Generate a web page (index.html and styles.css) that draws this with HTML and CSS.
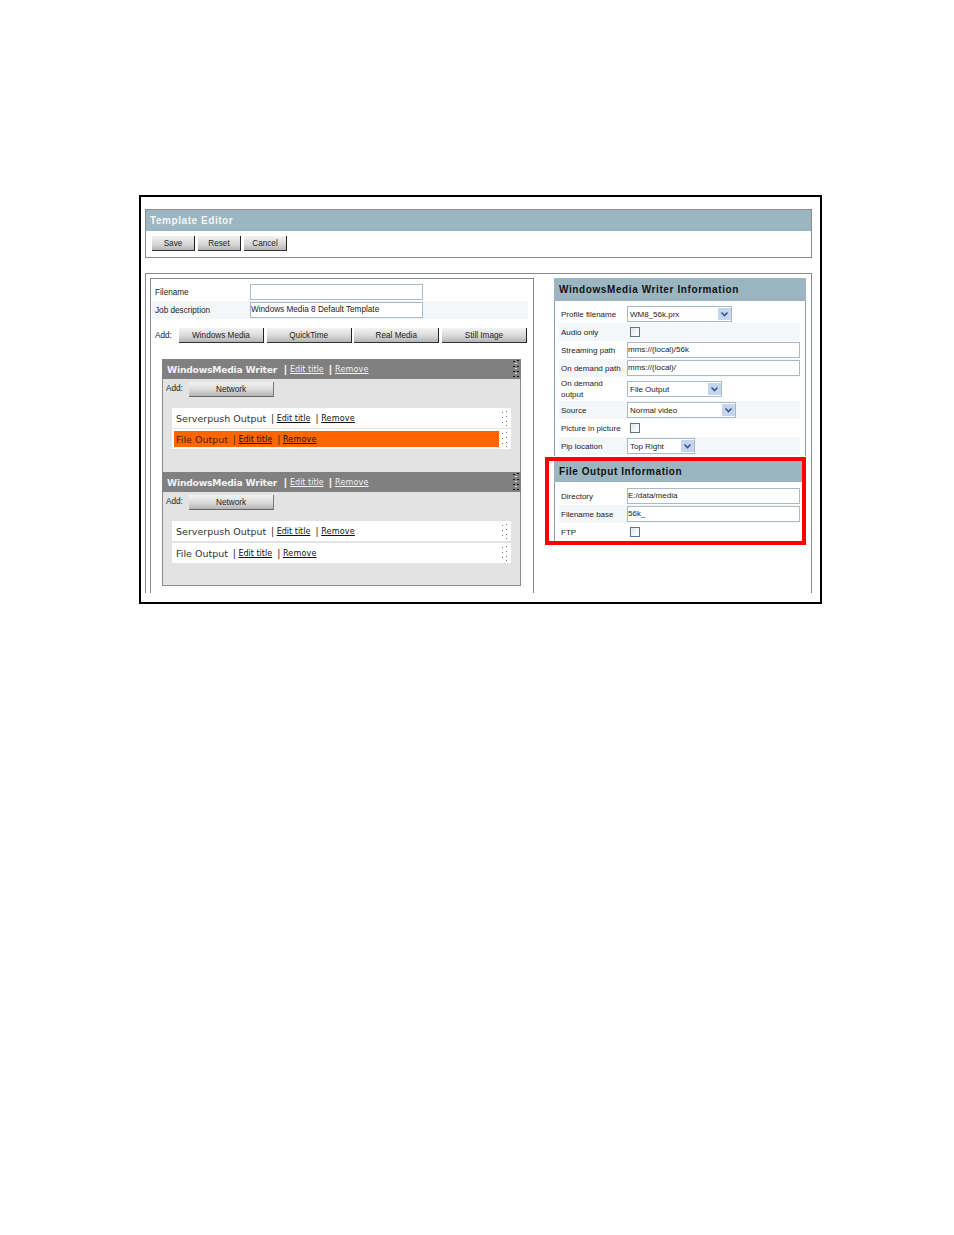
FILE: index.html
```html
<!DOCTYPE html>
<html lang="en">
<head>
<meta charset="utf-8">
<title>Template Editor</title>
<link rel="stylesheet" href="styles.css">
</head>
<body>
<svg class="defs" width="0" height="0" aria-hidden="true">
  <symbol id="chev" viewBox="0 0 13 12"><rect width="13" height="12" rx="1" fill="#c4d5ee"/><path d="M3.5 4.5 6.5 7.5 9.5 4.5" fill="none" stroke="#3a5590" stroke-width="1.6"/></symbol>
  <symbol id="grip" viewBox="0 0 6 15"><g fill="#777"><rect x="0" y="1" width="1" height="1"/><rect x="4" y="0" width="1" height="1"/><rect x="0" y="6" width="1" height="1"/><rect x="4" y="5" width="1" height="1"/><rect x="0" y="11" width="1" height="1"/><rect x="4" y="10" width="1" height="1"/><rect x="4" y="14" width="1" height="1"/></g></symbol>
  <symbol id="grip-dark" viewBox="0 0 6 19"><g fill="#111"><rect x="0" y="1" width="2" height="1"/><rect x="4" y="0" width="2" height="1"/><rect x="0" y="6" width="2" height="1"/><rect x="4" y="6" width="2" height="1"/><rect x="0" y="11" width="2" height="1"/><rect x="4" y="11" width="2" height="1"/><rect x="0" y="16" width="2" height="1"/><rect x="4" y="16" width="2" height="1"/></g><g fill="#ddd"><rect x="2" y="3" width="2" height="1"/><rect x="2" y="8" width="2" height="1"/><rect x="2" y="13" width="2" height="1"/></g></symbol>
</svg>
<div class="frame">
  <section class="panel-top">
    <h1 class="page-title">Template Editor</h1>
    <div class="toolbar">
      <button class="btn btn-sm">Save</button>
      <button class="btn btn-sm">Reset</button>
      <button class="btn btn-sm">Cancel</button>
    </div>
  </section>
  <section class="panel-main">
    <div class="left">
      <div class="job-row">
        <label class="job-label">Filename</label>
        <input class="field field-job" type="text" value="">
      </div>
      <div class="job-row job-row-alt">
        <label class="job-label">Job description</label>
        <input class="field field-job" type="text" value="Windows Media 8 Default Template">
      </div>
      <div class="add-row">
        <span class="add-label">Add:</span>
        <button class="btn btn-add">Windows Media</button>
        <button class="btn btn-add">QuickTime</button>
        <button class="btn btn-add">Real Media</button>
        <button class="btn btn-add">Still Image</button>
      </div>
      <div class="writers">
        <div class="writer">
          <div class="writer-head">
            <span class="writer-title">WindowsMedia Writer</span><span class="bar">|</span><a class="wlink wlink-1">Edit title</a><span class="bar">|</span><a class="wlink wlink-2">Remove</a>
            <svg class="grip-dark"><use href="#grip-dark"/></svg>
          </div>
          <div class="writer-add"><span class="writer-add-label">Add:</span><button class="btn btn-net">Network</button></div>
          <div class="items">
            <div class="item">
              <div class="item-body"><span class="item-name">Serverpush Output</span><span class="ibar">|</span><a class="ilink ilink-1">Edit title</a><span class="ibar">|</span><a class="ilink ilink-2">Remove</a></div>
              <svg class="grip"><use href="#grip"/></svg>
            </div>
            <div class="item">
              <div class="item-body item-active"><span class="item-name">File Output</span><span class="ibar">|</span><a class="ilink ilink-1">Edit title</a><span class="ibar">|</span><a class="ilink ilink-2">Remove</a></div>
              <svg class="grip"><use href="#grip"/></svg>
            </div>
          </div>
        </div>
        <div class="writer writer-next">
          <div class="writer-head">
            <span class="writer-title">WindowsMedia Writer</span><span class="bar">|</span><a class="wlink wlink-1">Edit title</a><span class="bar">|</span><a class="wlink wlink-2">Remove</a>
            <svg class="grip-dark"><use href="#grip-dark"/></svg>
          </div>
          <div class="writer-add"><span class="writer-add-label">Add:</span><button class="btn btn-net">Network</button></div>
          <div class="items items-wide">
            <div class="item">
              <div class="item-body"><span class="item-name">Serverpush Output</span><span class="ibar">|</span><a class="ilink ilink-1">Edit title</a><span class="ibar">|</span><a class="ilink ilink-2">Remove</a></div>
              <svg class="grip"><use href="#grip"/></svg>
            </div>
            <div class="item">
              <div class="item-body"><span class="item-name">File Output</span><span class="ibar">|</span><a class="ilink ilink-1">Edit title</a><span class="ibar">|</span><a class="ilink ilink-2">Remove</a></div>
              <svg class="grip"><use href="#grip"/></svg>
            </div>
          </div>
        </div>
      </div>
    </div>
    <div class="right">
      <div class="info">
        <h2 class="info-title">WindowsMedia Writer Information</h2>
        <div class="info-rows">
          <div class="row"><label class="row-label">Profile filename</label><div class="select s-105"><span>WM8_56k.prx</span><svg class="chev"><use href="#chev"/></svg></div></div>
          <div class="row row-alt"><label class="row-label">Audio only</label><input class="check" type="checkbox"></div>
          <div class="row"><label class="row-label">Streaming path</label><input class="field field-row" type="text" value="mms://(local)/56k"></div>
          <div class="row row-alt"><label class="row-label">On demand path</label><input class="field field-row" type="text" value="mms://(local)/"></div>
          <div class="row row-tall"><label class="row-label">On demand output</label><div class="select s-95"><span>File Output</span><svg class="chev"><use href="#chev"/></svg></div></div>
          <div class="row row-alt"><label class="row-label">Source</label><div class="select s-109"><span>Normal video</span><svg class="chev"><use href="#chev"/></svg></div></div>
          <div class="row"><label class="row-label">Picture in picture</label><input class="check" type="checkbox"></div>
          <div class="row row-alt"><label class="row-label">Pip location</label><div class="select s-68"><span>Top Right</span><svg class="chev"><use href="#chev"/></svg></div></div>
        </div>
      </div>
      <div class="info info-file">
        <h2 class="info-title info-title-file">File Output Information</h2>
        <div class="info-rows">
          <div class="row"><label class="row-label">Directory</label><input class="field field-row" type="text" value="E:/data/media"></div>
          <div class="row row-alt"><label class="row-label">Filename base</label><input class="field field-row" type="text" value="56k_"></div>
          <div class="row"><label class="row-label">FTP</label><input class="check" type="checkbox"></div>
        </div>
        <div class="highlight"></div>
      </div>
    </div>
  </section>
</div>
</body>
</html>
```
FILE: styles.css
```css
* { box-sizing: border-box; }
html, body { margin: 0; padding: 0; background: #fff; }
body { font-family: "Liberation Sans", Arial, sans-serif; font-size: 8.2px; color: #222; height: 1235px; overflow: hidden; }
.defs { position: absolute; }

.frame { margin: 195px 0 0 139px; width: 683px; height: 409px; border: 2px solid #000; padding: 12px 0 0 4px; }

.panel-top { width: 667px; height: 49px; border: 1px solid #8a8a8a; }
.page-title { margin: 0; height: 21px; background: #9bb5c1; color: #f4f7f8; font: bold 10px/21px "Liberation Sans", sans-serif; letter-spacing: .56px; padding-left: 4px; }
.toolbar { display: flex; gap: 3px; padding: 5px 0 0 6px; }

.btn { padding: 0; border: 0; border-right: 1px solid #222; border-bottom: 1px solid #333; background: linear-gradient(#f3f3f3, #d9d9d9 55%, #b5b5b5); font: 8.2px "Liberation Sans", sans-serif; color: #222; }
.btn-sm { width: 43px; height: 15px; }
.btn-add { width: 85px; height: 15px; }
.btn-net { width: 85px; height: 15px; border-right-color: #777; border-bottom-color: #666; }

.panel-main { display: flex; width: 667px; height: 320px; margin-top: 15px; padding: 4px 0 0 4px; border: 1px solid #8a8a8a; border-bottom: 0; }
.left { width: 384px; height: 315px; border: 1px solid #8a8a8a; border-bottom: 0; padding-top: 5px; }
.right { width: 252px; margin-left: 20px; }

.job-row { display: flex; align-items: center; width: 376px; height: 16px; margin-left: 1px; padding-left: 3px; }
.job-row-alt { height: 18px; margin-top: 1px; background: #f4f7fa; }
.job-label { width: 95px; }
.field { border: 1px solid #a9b9c6; padding: 0 0 2px 0; margin: 0; background: #fff; font: 8px "Liberation Sans", sans-serif; color: #222; outline: 0; }
.field-job { width: 173px; height: 16px; font-size: 8.2px; }

.add-row { display: flex; align-items: center; gap: 2.67px; margin: 9px 0 0 4px; }
.add-label { width: 21.33px; }

.writers { width: 359px; height: 227px; margin: 16px 0 0 11px; background: #e3e3e3; border: 1px solid #8a8a8a; border-top: 0; }
.writer-next { margin-top: 23px; }
.writer-head { position: relative; display: flex; align-items: center; height: 20px; margin: 0 -1px; padding-left: 5px; background: #808080; color: #f2f2f2; }
.writer-title { font: bold 9.2px "DejaVu Sans", sans-serif; letter-spacing: -.2px; width: 112px; white-space: nowrap; }
.bar { font: bold 10px "Liberation Sans", sans-serif; margin: 0 4px 0 5px; width: 2px; }
.wlink, .ilink { text-decoration: underline; white-space: nowrap; font-family: "DejaVu Sans", sans-serif; }
.wlink { font-size: 8px; color: #f2f2f2; }
.wlink-1 { width: 34px; }
.wlink-2 { letter-spacing: .2px; }
.grip-dark { position: absolute; right: 2px; top: 1px; width: 6px; height: 19px; }

.writer-add { display: flex; align-items: center; margin-top: 3px; height: 15px; padding-left: 3px; }
.writer-add-label { width: 23px; padding-bottom: 2px; }

.items { display: flex; flex-direction: column; gap: 1px; width: 339px; margin: 11px 0 0 9px; }
.items-wide { gap: 2px; }
.item { position: relative; height: 20px; background: #fff; padding: 2px 12px 2px 2px; }
.item-body { display: flex; align-items: center; height: 16px; padding: 0 0 0 2px; }
.item-active { background: #ff6600; color: #4a1d00; }
.item-name { font: 9.5px "DejaVu Sans", sans-serif; color: #333; white-space: nowrap; }
.item-active .item-name { color: #4a1d00; }
.ibar { margin: 0 3.5px 0 5px; width: 2px; font: 10px "Liberation Sans", sans-serif; color: #333; }
.ilink { font-size: 8px; color: #111; }
.ilink-1 { width: 34px; }
.ilink-2 { letter-spacing: .2px; }
.grip { position: absolute; right: 3px; top: 3px; width: 6px; height: 15px; }

.info { border: 1px solid #8a9ba5; border-top: 0; border-bottom: 0; height: 178px; }
.info-title { margin: 0 -1px; height: 23px; background: #9bb5c1; color: #111; font: bold 10px/23px "Liberation Sans", sans-serif; letter-spacing: .6px; padding-left: 5px; }
.info-rows { padding: 4px 5px 0 4px; }
.row { display: flex; align-items: center; height: 18px; padding-left: 2px; font-size: 8px; }
.row-alt { background: #f4f7fa; }
.row-tall { height: 24px; }
.row-label { flex: 0 0 66px; line-height: 11px; }
.field-row { flex: 1; min-width: 0; height: 16px; }
.check { appearance: none; width: 10px; height: 10px; margin: 0 0 0 3px; border: 1px solid #5e7683; background: linear-gradient(135deg, #e4e9ec, #fff); }
.select { display: flex; align-items: center; justify-content: space-between; height: 16px; border: 1px solid #a9b9c6; background: #fff; padding: 0 0 0 2px; }
.select span { white-space: nowrap; }
.chev { width: 13px; height: 12px; }
.s-105 { width: 105px; }
.s-95 { width: 95px; }
.s-109 { width: 109px; }
.s-68 { width: 68px; }

.info-file { position: relative; height: 85px; margin-top: 4px; border-bottom: 1px solid #8a9ba5; border-top: 1px solid #8a9ba5; }
.info-title-file { height: 21px; line-height: 21px; letter-spacing: .55px; }
.info-file .info-rows { padding-top: 5px; }
.highlight { position: absolute; left: -10px; top: -4px; right: -1px; bottom: -1px; border: 4px solid #f00; }
```
